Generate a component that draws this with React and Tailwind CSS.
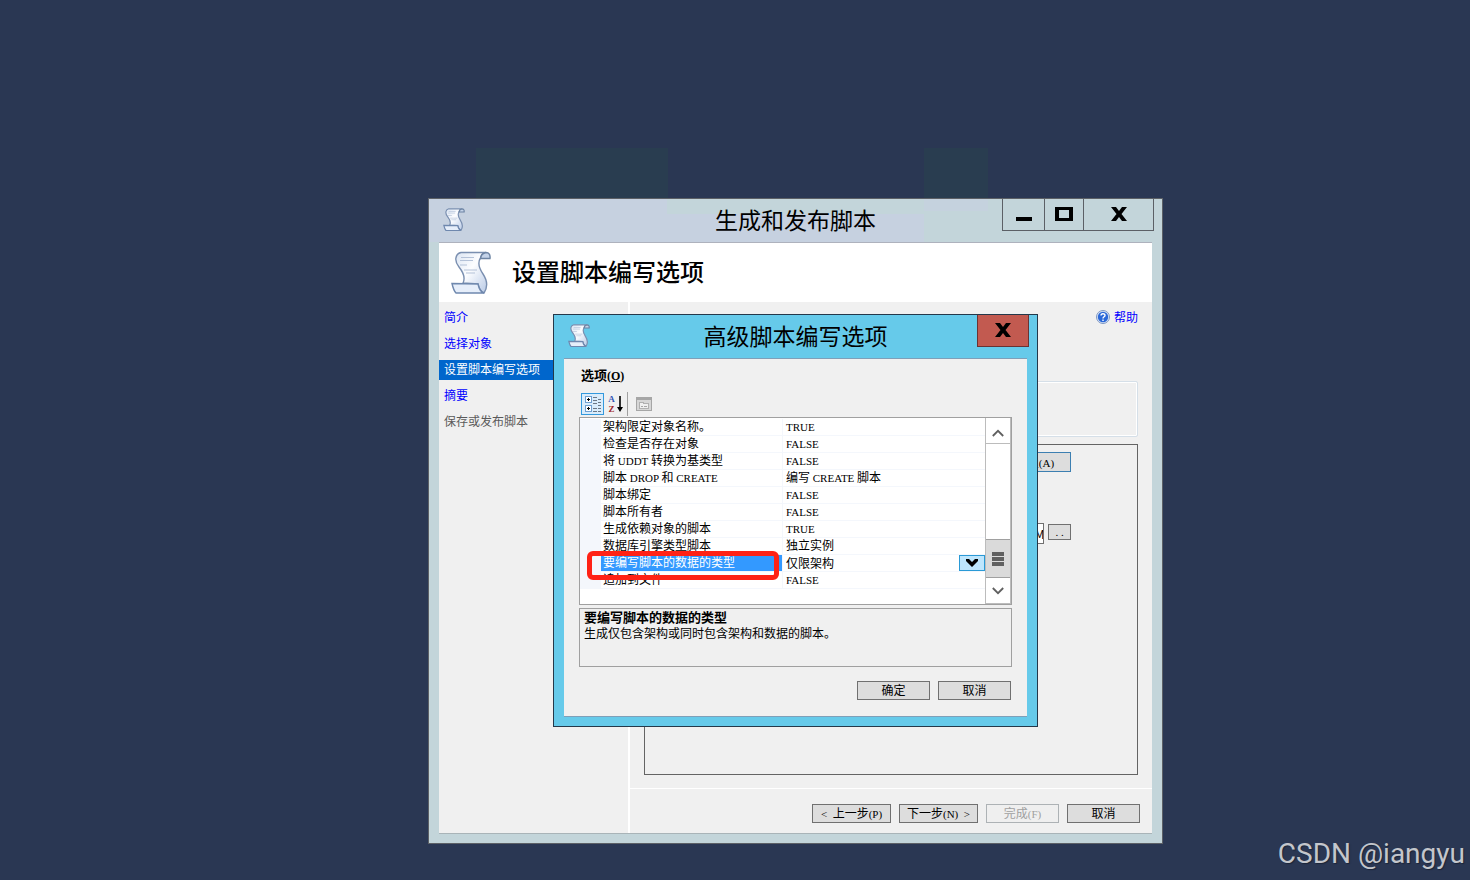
import React, { useState } from 'react';

const steps = [
  { name: '简介', state: 'done' },
  { name: '选择对象', state: 'done' },
  { name: '设置脚本编写选项', state: 'current' },
  { name: '摘要', state: 'done' },
  { name: '保存或发布脚本', state: 'pending' }
];

const options = [
  { name: '架构限定对象名称。', value: 'TRUE' },
  { name: '检查是否存在对象', value: 'FALSE' },
  { name: '将 UDDT 转换为基类型', value: 'FALSE' },
  { name: '脚本 DROP 和 CREATE', value: '编写 CREATE 脚本' },
  { name: '脚本绑定', value: 'FALSE' },
  { name: '脚本所有者', value: 'FALSE' },
  { name: '生成依赖对象的脚本', value: 'TRUE' },
  { name: '数据库引擎类型脚本', value: '独立实例' },
  { name: '要编写脚本的数据的类型', value: '仅限架构', selected: true },
  { name: '追加到文件', value: 'FALSE' }
];

// Latin runs are set in a smaller serif beside the Chinese text
const Mixed = ({ text }) =>
  text.split(/([\x20-\x7e]+)/).filter(Boolean).map((part, i) =>
    /^[\x20-\x7e]+$/.test(part) ? (
      <span key={i} className="font-['Liberation_Serif',serif] text-[11px] leading-none whitespace-pre">{part}</span>
    ) : (
      <span key={i}>{part}</span>
    )
  );

const ScrollIcon = ({ className, strokeWidth = 1.4 }) => (
  <svg viewBox="0 0 40 43" className={className} aria-hidden="true">
    <defs>
      <linearGradient id="paper" x1="0" y1="0" x2="1" y2="1">
        <stop offset="0" stopColor="#dbe5f3" />
        <stop offset="0.45" stopColor="#fcfdff" />
        <stop offset="1" stopColor="#b9cae6" />
      </linearGradient>
    </defs>
    <path
      d="M10 1.500H35C32 2 30 4 29.500 7C26 12 28 17 32 23C36 29 37 36 33 42C30 41 28 38 27 33L12 32C15 26 12 21 8 16C3 10 4 3 10 1.500Z"
      fill="url(#paper)" stroke="#7a8fb0" strokeWidth={strokeWidth}
    />
    <path d="M35 1.500C32 2 30 4 29.500 7.500L39 7.500C39.500 4 38 1.500 35 1.500Z" fill="#c4d3e9" stroke="#6d84a3" strokeWidth={strokeWidth} />
    <path d="M1 32.500L27 33C28 38 30 41 33 42H5C3 40 2 37 1 32.500Z" fill="#e6eefa" stroke="#6f88ae" strokeWidth={strokeWidth} />
    <path d="M10 6.500H23M9 9.500H22M9 14H16M13 19H26M15 22H24" stroke="#b4c2d8" strokeWidth="1.2" />
  </svg>
);

const CloseGlyph = () => (
  <svg viewBox="0 0 16 14" className="w-4 h-3.5" aria-hidden="true">
    <path d="M0 0H5L8 4L11 0H16L10.500 7L16 14H11L8 10L5 14H0L5.500 7Z" fill="#000" />
  </svg>
);

const PushButton = ({ children, className = '', ...rest }) => (
  <button
    type="button"
    className={`h-[19px] pb-0.5 border border-[#707070] bg-[#dddddd] leading-4 text-center whitespace-nowrap disabled:border-[#adb2b5] disabled:bg-[#efefef] disabled:text-[#a0a0a0] ${className}`}
    {...rest}
  >
    {children}
  </button>
);

const StepList = () => (
  <nav className="w-[191px] shrink-0 border-r-2 border-white pt-1.5">
    <ul className="flex flex-col gap-1.5">
      {steps.map((step) => (
        <li key={step.name}>
          <a
            href="#"
            className={`block h-5 pl-[5px] leading-[18px] ${
              step.state === 'current'
                ? 'bg-[#0066cc] text-white'
                : step.state === 'pending'
                  ? 'text-[#5a5a5a]'
                  : 'text-[#0000ff]'
            }`}
          >
            {step.name}
          </a>
        </li>
      ))}
    </ul>
  </nav>
);

const WizardWindow = () => (
  <section className="absolute left-[428px] top-[198px] w-[735px] border border-[#5c6066] bg-[#c3d5da]">
    <header className="flex h-[43px] bg-[#c6d1e0]">
      <div className="absolute top-0 left-[238px] w-[257px] h-[15px] bg-[#c3d5da]"></div>
      <div className="absolute top-0 left-[495px] right-0 h-[43px] bg-[#c3d5da]"></div>
      <div className="absolute top-0 left-[495px] w-16 h-3 bg-[#c5d2de]"></div>
      <ScrollIcon className="w-[22px] h-[23px] ml-3.5 mt-[9px]" strokeWidth={2.2} />
      <h1 className="absolute inset-x-0 top-1 text-center text-[23px] leading-8">生成和发布脚本</h1>
      <div className="relative ml-auto mr-2 flex h-8 border-x border-b border-[#5c6066]">
        <button type="button" aria-label="最小化" className="w-[42px] flex justify-center items-center border-r border-[#5c6066]">
          <span className="mt-2 w-4 h-1 bg-black"></span>
        </button>
        <button type="button" aria-label="最大化" className="w-[39px] flex justify-center items-center pb-0.5 border-r border-[#5c6066]">
          <span className="w-[18px] h-3.5 border-x-4 border-y-3 border-black"></span>
        </button>
        <button type="button" aria-label="关闭" className="w-[69px] flex justify-center items-center pb-0.5">
          <CloseGlyph />
        </button>
      </div>
    </header>
    <div className="mx-[10px] mb-[9px] border-y border-t-[#aeb2bd] border-b-[#a9b4b8] bg-[#f0f0f0]">
      <div className="flex items-center h-[59px] bg-white pl-3">
        <ScrollIcon className="w-10 h-[43px]" />
        <h2 className="ml-[21px] pb-1 text-2xl font-medium">设置脚本编写选项</h2>
      </div>
      <div className="flex">
        <StepList />
        <div className="flex-1">
          <div className="flex justify-end pt-[5px] pr-[14px]">
            <a href="#" className="flex items-center gap-1 h-5 leading-[18px] text-[#0000ff]">
              <svg viewBox="0 0 14 14" className="w-3.5 h-3.5" aria-hidden="true">
                <circle cx="7" cy="7" r="6.5" fill="#dce6f5" stroke="#7d97c4" />
                <circle cx="7" cy="7" r="5.2" fill="#2b68d8" />
                <path d="M5 5.6C5 3.2 9 3.2 9 5.4C9 6.8 7 6.8 7 8.4M7 9.6V11" fill="none" stroke="#fff" strokeWidth="1.4" />
              </svg>
              帮助
            </a>
          </div>
          <div className="mt-[54px] ml-3.5 mr-[14px] h-14 rounded-xs border border-[#d5dfe8] shadow-[inset_0_0_0_1px_#fff]"></div>
          <div className="mt-[7px] ml-3.5 mr-[14px] h-[331px] border border-[#646464] pt-[7px] pr-[66px]">
            <div className="flex justify-end">
              <button type="button" className="w-[73px] h-5 border border-[#3c7fb1] bg-[#dddddd] leading-4">
                <Mixed text="高级(A)" />
              </button>
            </div>
            <div className="mt-[51px] flex justify-end gap-1">
              <input
                type="text"
                aria-label="文件名"
                defaultValue="C:\Users\Administrator\Documents\SQL Server Management Studio\script.sql"
                className="w-[280px] h-[21px] border border-[#707070] bg-white pl-1"
              />
              <PushButton aria-label="浏览" className="mt-px w-[23px] h-4! leading-3!">
                <Mixed text=". ." />
              </PushButton>
            </div>
          </div>
          <footer className="mt-[13px] flex justify-end gap-2 border-t border-white pt-[15px] pr-3 pb-[10px]">
            <PushButton className="w-[79px]"><Mixed text="<  上一步(P)" /></PushButton>
            <PushButton className="w-[79px]"><Mixed text="下一步(N)  >" /></PushButton>
            <PushButton className="w-[73px]" disabled><Mixed text="完成(F)" /></PushButton>
            <PushButton className="w-[73px]">取消</PushButton>
          </footer>
        </div>
      </div>
    </div>
  </section>
);

const Toolbar = () => (
  <div className="flex items-center h-6 pl-0.5">
    <button type="button" aria-label="按分类顺序" className="w-[23px] h-[22px] flex justify-center items-center border border-[#3399dd] bg-[#d9ecfb]">
      <svg viewBox="0 0 18 18" className="w-[18px] h-[18px]" shapeRendering="crispEdges" aria-hidden="true">
        <rect x="1.5" y="1.5" width="6" height="6" rx="1" fill="#fff" stroke="#6f9fd0" />
        <rect x="1.5" y="10.5" width="6" height="6" rx="1" fill="#fff" stroke="#6f9fd0" />
        <path d="M3 4.5H6M4.5 3V6M3 13.5H6M4.5 12V15" stroke="#000" />
        <path d="M9 2.5H13M9 5.5H13M9 8.5H13M9 13.5H13M9 16.5H13M14 4.5H17M14 7.5H17M14 10.5H17M14 13.5H17M14 16.5H17" stroke="#6b7785" />
      </svg>
    </button>
    <button type="button" aria-label="按字母顺序" className="w-[23px] h-[22px] flex justify-center items-center">
      <span className="flex flex-col items-center font-['Liberation_Serif',serif] font-bold text-[9px] leading-[10px]">
        <span className="text-[#3355b5]">A</span>
        <span className="text-[#a02828]">Z</span>
      </span>
      <svg viewBox="0 0 6 16" className="w-1.5 h-4 ml-0.5" aria-hidden="true">
        <path d="M2.2 0H3.8V11H6L3 16L0 11H2.2Z" fill="#000" />
      </svg>
    </button>
    <div className="w-px h-6 bg-[#a0a0a0]"></div>
    <button type="button" aria-label="属性页" disabled className="ml-2 w-4 h-4">
      <svg viewBox="0 0 16 16" className="w-4 h-4" shapeRendering="crispEdges" aria-hidden="true">
        <rect x="0.5" y="1.5" width="15" height="13" fill="#d6d6d6" stroke="#a6a6a6" />
        <path d="M1 2.5H15" stroke="#a6a6a6" strokeWidth="2" />
        <path d="M3.500 6.500H7.500V7.500H12.500V12.500H3.500Z" fill="#efefef" stroke="#b0b0b0" />
        <path d="M5 10.500H7M8 10.500H11" stroke="#a6a6a6" />
      </svg>
    </button>
  </div>
);

const Chevron = ({ up }) => (
  <svg viewBox="0 0 12 8" className={`w-3 h-2 ${up ? 'rotate-180' : ''}`} aria-hidden="true">
    <path d="M0.800 1L6 6.200L11.200 1" fill="none" stroke="#606060" strokeWidth="1.8" />
  </svg>
);

const OptionGrid = () => {
  const [dataType, setDataType] = useState('仅限架构');

  return (
    <div className="relative flex border border-[#a0a0a0] bg-white">
      <table className="flex-1 mt-px mb-[15px] table-fixed border-separate border-spacing-0" aria-labelledby="options-label">
        <colgroup>
          <col className="w-[21px]" />
          <col className="w-[182px]" />
          <col />
        </colgroup>
        <tbody>
          {options.map((option) => (
            <tr key={option.name}>
              <td className="bg-[#f4f7fc] p-0"></td>
              <th
                scope="row"
                className={`p-0 pl-0.5 text-left font-normal border-b border-r border-[#f4f7fc] ${
                  option.selected ? 'bg-[#3399ff] bg-clip-padding text-white' : ''
                }`}
              >
                <div className="h-4 leading-[14px] whitespace-nowrap">
                  <Mixed text={option.name} />
                </div>
              </th>
              <td className="p-0 pl-[3px] border-b border-[#f4f7fc]">
                {option.selected ? (
                  <div className="flex h-4">
                    <select
                      aria-label={option.name}
                      value={dataType}
                      onChange={(e) => setDataType(e.target.value)}
                      className="flex-1 h-4 appearance-none p-0 leading-[14px]"
                    >
                      <option>仅限架构</option>
                      <option>仅限数据</option>
                      <option>架构和数据</option>
                    </select>
                    <span className="w-[26px] h-4 flex justify-center items-center border border-[#2a9ad6] bg-[#bee6fd]">
                      <svg viewBox="0 0 12 8" className="w-3 h-2" aria-hidden="true">
                        <path d="M0 0H3L6 3L9 0H12V2L6 8L0 2Z" fill="#000" />
                      </svg>
                    </span>
                  </div>
                ) : (
                  <div className="h-4 leading-[14px] whitespace-nowrap">
                    <Mixed text={option.value} />
                  </div>
                )}
              </td>
            </tr>
          ))}
        </tbody>
      </table>
      <div className="w-[26px] flex flex-col border-x border-[#bcbcbc]">
        <div className="h-[26px] flex justify-center items-center border-b border-[#bcbcbc] pt-1">
          <Chevron up />
        </div>
        <div className="flex-1"></div>
        <div className="h-[39px] flex flex-col justify-center items-center gap-px border-y border-[#a0a0a0] bg-[#dadada]">
          <span className="w-3 h-1 bg-[#606060]"></span>
          <span className="w-3 h-1 bg-[#606060]"></span>
          <span className="w-3 h-1 bg-[#606060]"></span>
        </div>
        <div className="h-[26px] flex justify-center items-center border-b border-[#bcbcbc]">
          <Chevron />
        </div>
      </div>
      <div className="absolute left-[7px] top-[133px] w-48 h-[29px] rounded-md border-5 border-[#ff2216] pointer-events-none"></div>
    </div>
  );
};

const OptionsDialog = () => (
  <section role="dialog" aria-labelledby="dialog-title" className="absolute left-[553px] top-[314px] w-[485px] border border-[#24384a] bg-[#66caea]">
    <header className="flex h-[43px]">
      <ScrollIcon className="w-[22px] h-[23px] ml-3.5 mt-[9px]" strokeWidth={2.2} />
      <h2 id="dialog-title" className="absolute inset-x-0 top-1 text-center text-[23px] leading-8">高级脚本编写选项</h2>
      <button type="button" aria-label="关闭" className="relative ml-auto mr-2 w-[52px] h-8 flex justify-center items-center pb-0.5 border-x border-b border-[#6b3232] bg-[#c25a50]">
        <CloseGlyph />
      </button>
    </header>
    <div className="mx-[10px] mb-[9px] border-y border-[#7f9fb8] bg-[#f0f0f0] px-[15px] pb-4">
      <div id="options-label" className="h-[33px] pt-[7px] pl-0.5 text-[13px] font-bold leading-[18px]">
        选项<span className="font-['Liberation_Serif',serif] text-xs leading-none">(<u>O</u>)</span>
      </div>
      <Toolbar />
      <div className="mt-px">
        <OptionGrid />
      </div>
      <div className="mt-[3px] h-[59px] border border-[#a0a0a0] pl-1">
        <h3 className="text-[13px] font-bold leading-4">要编写脚本的数据的类型</h3>
        <p className="leading-4">生成仅包含架构或同时包含架构和数据的脚本。</p>
      </div>
      <div className="mt-3.5 pr-px flex justify-end gap-2">
        <PushButton className="w-[73px]">确定</PushButton>
        <PushButton className="w-[73px]">取消</PushButton>
      </div>
    </div>
  </section>
);

const App = () => (
  <main className="relative min-h-screen overflow-hidden bg-[#2a3753] text-xs text-black font-['Noto_Sans_CJK_SC',sans-serif]">
    <div className="absolute left-[476px] top-[148px] w-48 h-[50px] bg-[#293d50]"></div>
    <div className="absolute left-[924px] top-[148px] w-16 h-[50px] bg-[#293d50]"></div>
    <WizardWindow />
    <OptionsDialog />
    <p className="absolute right-[5px] bottom-2 font-['Roboto',sans-serif] text-[28px] leading-9 text-[#c3c6cc] [text-shadow:1px_1px_1px_#1c2538]">
      CSDN @iangyu
    </p>
  </main>
);

export default App;
